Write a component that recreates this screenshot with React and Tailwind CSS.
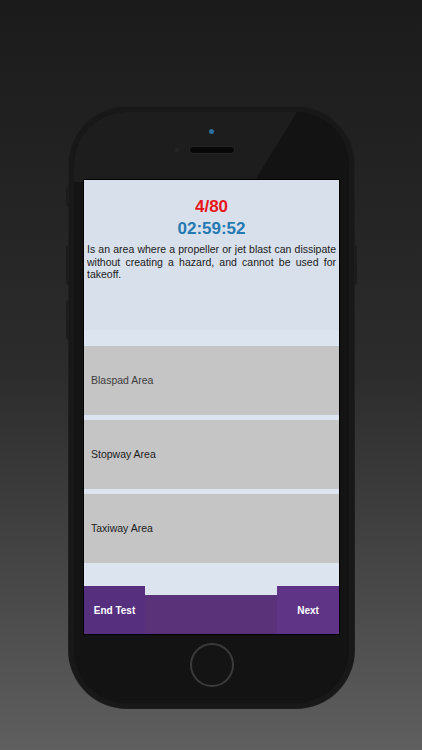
export default function App() {
  const options = [
    { label: 'Blaspad Area', tone: 'text-[#3d3d3d]' },
    { label: 'Stopway Area', tone: 'text-[#1c1c1c]' },
    { label: 'Taxiway Area', tone: 'text-[#1c1c1c]' },
  ];

  return (
    <div
      className="w-[422px] h-[750px] overflow-hidden bg-linear-to-b from-[#1b1b1b] via-[#2c2c2c] to-[#5f5f5f] pt-[107px] pl-[69px]"
      style={{ fontFamily: '"Liberation Sans", Arial, sans-serif' }}
    >
      {/* phone body */}
      <div className="relative w-[285px] h-[601px] rounded-[58px] bg-[#181818] p-[5px] shadow-[0_0_0_1px_#1e1e1e]">
        {/* side buttons */}
        <div className="absolute -left-[3px] top-[80px] w-[3px] h-[20px] rounded-l-sm bg-[#1c1c1c]" />
        <div className="absolute -left-[3px] top-[138px] w-[3px] h-[40px] rounded-l-sm bg-[#1c1c1c]" />
        <div className="absolute -left-[3px] top-[193px] w-[3px] h-[40px] rounded-l-sm bg-[#1c1c1c]" />
        <div className="absolute -right-[3px] top-[138px] w-[3px] h-[40px] rounded-r-sm bg-[#1c1c1c]" />

        <div className="relative w-[275px] h-[591px] rounded-[53px] bg-[#131313] overflow-hidden flex flex-col items-center">
          {/* glossy reflection */}
          <svg className="absolute left-0 top-0" width="275" height="70" viewBox="0 0 275 70">
            <polygon points="0,0 223,0 180,70 0,70" fill="#1d1d1d" />
          </svg>

          <div className="relative mt-[17px] w-[5px] h-[5px] rounded-full bg-[#2a6f9f]" />
          <div className="relative mt-[13px] w-[44px] h-[6px] rounded-full bg-[#070707] shadow-[0_0_0_1px_#262626]">
            <div className="absolute -left-[15px] top-[1px] w-[4px] h-[4px] rounded-full bg-[#262626]" />
          </div>

          {/* screen */}
          <div className="relative mt-[27px] w-[255px] h-[454px] bg-[#dce4ef] outline-1 outline-black flex flex-col">
            <div className="h-[150px] bg-[#d7e0eb] pt-[17px] px-[3px]">
              <div className="text-center text-[17px] leading-[20px] font-bold text-[#e8161b]">4/80</div>
              <div className="mt-[2px] text-center text-[17px] leading-[20px] font-bold text-[#2479b3]">
                02:59:52
              </div>
              <p className="mt-[4px] text-[10.5px] leading-[12.5px] text-[#1a1a1a] text-justify">
                Is an area where a propeller or jet blast can dissipate without creating a hazard, and cannot be used for takeoff.
              </p>
            </div>

            <div className="pt-[16px] flex flex-col gap-[5px]">
              {options.map((o) => (
                <div key={o.label} className="h-[69px] bg-[#c5c5c5] flex items-center pl-[7px]">
                  <span className={`text-[10.5px] ${o.tone}`}>{o.label}</span>
                </div>
              ))}
            </div>

            <div className="mt-auto h-[48px] flex items-end">
              <div className="w-[61px] h-full bg-[#56307f] flex items-center justify-center text-white text-[10px] font-bold">
                End Test
              </div>
              <div className="flex-1 h-[39px] bg-[#5a3279]" />
              <div className="w-[62px] h-full bg-[#5f3486] flex items-center justify-center text-white text-[10px] font-bold">
                Next
              </div>
            </div>
          </div>

          {/* home button */}
          <div className="mt-[9px] w-[44px] h-[44px] rounded-full border-2 border-[#3b3b3b] bg-[#141414]" />
        </div>
      </div>
    </div>
  );
}
